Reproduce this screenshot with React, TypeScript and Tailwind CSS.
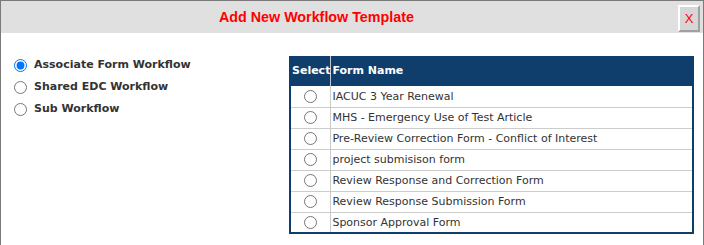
import React from "react";

const forms = [
  "IACUC 3 Year Renewal",
  "MHS - Emergency Use of Test Article",
  "Pre-Review Correction Form - Conflict of Interest",
  "project submisison form",
  "Review Response and Correction Form",
  "Review Response Submission Form",
  "Sponsor Approval Form",
];

const options = ["Associate Form Workflow", "Shared EDC Workflow", "Sub Workflow"];

export default function App() {
  return (
    <div className="w-[704px] h-[245px] overflow-hidden bg-white border-t border-l border-r border-[#7a7a7a] font-['DejaVu_Sans',sans-serif]">
      <div className="h-[32px] bg-[#e0e0e0] flex items-center relative">
        <div className="pl-[218px] pt-[1px] text-[14.3px] font-bold text-[#ff0000] font-['Liberation_Sans',sans-serif] leading-none">
          Add New Workflow Template
        </div>
        <button className="absolute left-[677px] top-[4px] w-[22px] h-[27px] bg-[#d6d6d6] border-2 border-t-white border-l-white border-r-[#a0a0a0] border-b-[#a0a0a0] text-[#ff0000] text-[13px] font-['Liberation_Sans',sans-serif] flex items-center justify-center leading-none">
          X
        </button>
      </div>
      <div className="flex">
        <div className="w-[288px] pt-[21px] flex flex-col">
          {options.map((o, i) => (
            <label key={o} className="flex items-center h-[22px] pl-[13px]">
              <input
                type="radio"
                name="wf"
                defaultChecked={i === 0}
                className="w-[13px] h-[13px] m-0"
              />
              <span className="ml-[7px] text-[11px] font-bold text-[#333333]">{o}</span>
            </label>
          ))}
        </div>
        <div className="mt-[23px]">
          <table className="w-[405px] border-collapse border-2 border-t-0 border-[#0f3e6d] text-[11px]">
            <thead>
              <tr className="bg-[#0f3e6d] text-white h-[30px]">
                <th className="w-[38px] p-0 pl-[1px] text-left font-bold border-r border-[#c0c8d4]">Select</th>
                <th className="p-0 pl-[1px] text-left font-bold">Form Name</th>
              </tr>
            </thead>
            <tbody>
              {forms.map((f) => (
                <tr key={f} className="h-[21px]">
                  <td className="p-0 pt-[1px] text-center border-r border-b border-[#cccccc] align-middle">
                    <input type="radio" name="form" className="w-[13px] h-[13px] m-0 align-middle" />
                  </td>
                  <td className="p-0 pt-[2px] pl-[1px] border-b border-[#cccccc] text-[#333333] whitespace-nowrap">{f}</td>
                </tr>
              ))}
            </tbody>
          </table>
        </div>
      </div>
    </div>
  );
}
